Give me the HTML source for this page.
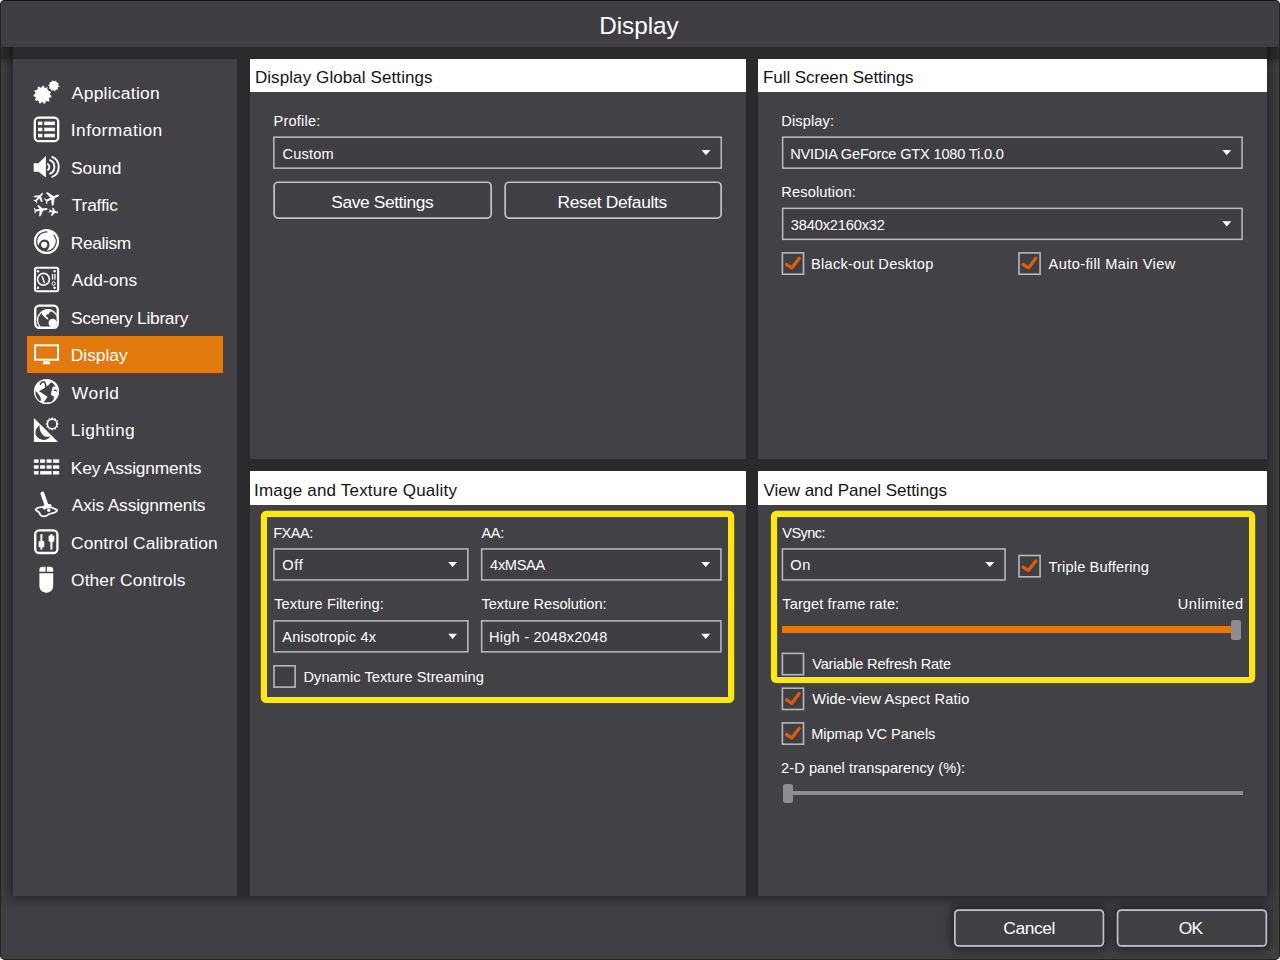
<!DOCTYPE html>
<html lang="en">
<head>
<meta charset="utf-8">
<title>Display</title>
<style>
*{box-sizing:border-box;margin:0;padding:0}
html,body{width:1280px;height:960px;overflow:hidden;background:#fff}
body{font-family:"Liberation Sans",sans-serif;color:#fff;position:relative}
#win{position:absolute;left:0;top:0;width:1280px;height:960px;background:#413f45;border-radius:5px;overflow:hidden}
#frame{position:absolute;left:0;top:0;width:1280px;height:960px;border:7px solid #3f3f40;border-radius:5px}
#edge{position:absolute;left:0;top:0;width:1280px;height:960px;border:1px solid #242425;border-top-color:#141415;border-radius:5px;z-index:9}
#back{position:absolute;left:13px;top:40px;width:1254px;height:856px;background:#2a2a2c;box-shadow:0 0 11px 3px rgba(0,0,0,.46)}
#band{position:absolute;left:0;top:40px;width:1280px;height:19px;background:#2a2a2c;box-shadow:0 3px 5px rgba(0,0,0,.25)}
#title{position:absolute;left:0;top:0;width:1280px;height:47px;background:#403e43}
.pane{position:absolute;background:#424146}
.hd{position:absolute;left:0;top:0;right:0;height:33.8px;background:#fff}
.t{position:absolute;white-space:nowrap}
.sel{position:absolute;left:27.5px;top:335.8px;width:196px;height:37.2px;background:#e2790f}
svg{position:absolute;left:0;top:0}
</style>
</head>
<body>
<div id="win">
<div id="frame"></div>
<div id="band"></div>
<div id="back"></div>
<div id="title"></div>
<div class="pane" style="left:13.4px;top:58.6px;width:224.1px;height:837.4px"><div class="sel" style="left:14.1px;top:277.2px"></div></div>
<div class="pane" style="left:249.8px;top:58.6px;width:496.2px;height:400.4px"><div class="hd"></div></div>
<div class="pane" style="left:758px;top:58.6px;width:509px;height:400.4px"><div class="hd"></div></div>
<div class="pane" style="left:249.8px;top:471.3px;width:496.2px;height:424.7px"><div class="hd"></div></div>
<div class="pane" style="left:758px;top:471.3px;width:509px;height:424.7px"><div class="hd"></div></div>
<div style="position:absolute;left:781.7px;top:626.4px;width:450px;height:7px;background:#e2790f"></div>
<div style="position:absolute;left:1231.4px;top:620.2px;width:10px;height:19.4px;background:#8d8d8f;border-radius:2.5px"></div>
<div style="position:absolute;left:788px;top:791.3px;width:454.5px;height:4px;background:#8d8d8f"></div>
<div style="position:absolute;left:782.8px;top:783.6px;width:10px;height:19.4px;background:#8d8d8f;border-radius:2.5px"></div>
<div style="position:absolute;left:954px;top:909.2px;width:150.3px;height:37.6px;border-radius:4px;box-shadow:0 0 9px 3px rgba(0,0,0,.45)"></div>
<div style="position:absolute;left:1116.7px;top:909.2px;width:150.5px;height:37.6px;border-radius:4px;box-shadow:0 0 9px 3px rgba(0,0,0,.45)"></div>
<svg width="1280" height="960" viewBox="0 0 1280 960">
<rect x="273.85" y="137.15" width="447.40" height="31.00" fill="#3f3e42" stroke="#bdbdbf" stroke-width="1.5"/>
<path fill="#fff" d="M701.60 150.10 h8.8 l-4.4 5.1z"/>
<rect x="274.15" y="182.25" width="217.00" height="35.80" rx="4" fill="#414045" stroke="#c2c2c4" stroke-width="1.7"/>
<rect x="505.15" y="182.25" width="216.00" height="35.80" rx="4" fill="#414045" stroke="#c2c2c4" stroke-width="1.7"/>
<rect x="782.65" y="137.15" width="459.40" height="31.00" fill="#3f3e42" stroke="#bdbdbf" stroke-width="1.5"/>
<path fill="#fff" d="M1222.40 150.10 h8.8 l-4.4 5.1z"/>
<rect x="782.65" y="208.35" width="459.40" height="31.00" fill="#3f3e42" stroke="#bdbdbf" stroke-width="1.5"/>
<path fill="#fff" d="M1222.40 221.30 h8.8 l-4.4 5.1z"/>
<rect x="782.40" y="252.90" width="21.10" height="21.30" fill="#3f3e42" stroke="#b8b8ba" stroke-width="1.6"/>
<rect x="1019.00" y="252.90" width="21.10" height="21.30" fill="#3f3e42" stroke="#b8b8ba" stroke-width="1.6"/>
<rect x="263.9" y="513.9" width="467.2" height="186.1" rx="2.3" fill="none" stroke="#ffe811" stroke-width="6.2"/>
<rect x="273.95" y="548.95" width="193.90" height="31.00" fill="#3f3e42" stroke="#bdbdbf" stroke-width="1.5"/>
<path fill="#fff" d="M448.20 561.90 h8.8 l-4.4 5.1z"/>
<rect x="481.65" y="548.95" width="239.30" height="31.00" fill="#3f3e42" stroke="#bdbdbf" stroke-width="1.5"/>
<path fill="#fff" d="M701.30 561.90 h8.8 l-4.4 5.1z"/>
<rect x="273.95" y="620.85" width="193.90" height="31.00" fill="#3f3e42" stroke="#bdbdbf" stroke-width="1.5"/>
<path fill="#fff" d="M448.20 633.80 h8.8 l-4.4 5.1z"/>
<rect x="481.65" y="620.85" width="239.30" height="31.00" fill="#3f3e42" stroke="#bdbdbf" stroke-width="1.5"/>
<path fill="#fff" d="M701.30 633.80 h8.8 l-4.4 5.1z"/>
<rect x="274.00" y="665.80" width="21.10" height="21.30" fill="#3f3e42" stroke="#b8b8ba" stroke-width="1.6"/>
<rect x="774" y="513.9" width="478.1" height="166.1" rx="2.3" fill="none" stroke="#ffe811" stroke-width="6.2"/>
<rect x="782.45" y="548.95" width="222.60" height="31.00" fill="#3f3e42" stroke="#bdbdbf" stroke-width="1.5"/>
<path fill="#fff" d="M985.40 561.90 h8.8 l-4.4 5.1z"/>
<rect x="1019.00" y="555.50" width="21.10" height="21.30" fill="#3f3e42" stroke="#b8b8ba" stroke-width="1.6"/>
<rect x="782.40" y="653.40" width="21.10" height="21.30" fill="#3f3e42" stroke="#b8b8ba" stroke-width="1.6"/>
<rect x="782.40" y="688.20" width="21.10" height="21.30" fill="#3f3e42" stroke="#b8b8ba" stroke-width="1.6"/>
<rect x="782.40" y="722.90" width="21.10" height="21.30" fill="#3f3e42" stroke="#b8b8ba" stroke-width="1.6"/>
<rect x="954.85" y="910.05" width="148.60" height="35.90" rx="4" fill="#414045" stroke="#c2c2c4" stroke-width="1.7"/>
<rect x="1117.55" y="910.05" width="148.80" height="35.90" rx="4" fill="#414045" stroke="#c2c2c4" stroke-width="1.7"/>
<path fill="#fff" d="M50.10 94.97 L51.55 95.71 L51.20 97.45 L49.57 97.56 L48.81 99.00 L49.64 100.40 L48.40 101.68 L46.97 100.89 L45.56 101.69 L45.50 103.32 L43.76 103.72 L42.98 102.29 L41.36 102.20 L40.43 103.53 L38.75 102.94 L38.87 101.31 L37.56 100.35 L36.05 100.97 L34.96 99.56 L35.95 98.26 L35.36 96.75 L33.75 96.45 L33.60 94.68 L35.13 94.11 L35.45 92.52 L34.26 91.41 L35.10 89.83 L36.69 90.19 L37.82 89.02 L37.42 87.44 L38.97 86.56 L40.12 87.72 L41.70 87.35 L42.22 85.81 L44.00 85.91 L44.34 87.50 L45.87 88.05 L47.14 87.03 L48.59 88.08 L48.01 89.60 L49.00 90.89 L50.62 90.72 L51.27 92.38 L49.96 93.35Z"/>
<path fill="#fff" stroke="#424146" stroke-width="1.3" d="M59.08 85.30 L60.30 85.74 L60.16 87.15 L58.87 87.34 L58.36 88.50 L59.09 89.57 L58.15 90.63 L57.00 90.03 L55.91 90.66 L55.86 91.96 L54.48 92.26 L53.90 91.10 L52.65 90.97 L51.85 92.00 L50.55 91.43 L50.77 90.15 L49.83 89.31 L48.58 89.67 L47.86 88.45 L48.79 87.54 L48.52 86.30 L47.30 85.86 L47.44 84.45 L48.73 84.26 L49.24 83.10 L48.51 82.03 L49.45 80.97 L50.60 81.57 L51.69 80.94 L51.74 79.64 L53.12 79.34 L53.70 80.50 L54.95 80.63 L55.75 79.60 L57.05 80.17 L56.83 81.45 L57.77 82.29 L59.02 81.93 L59.74 83.15 L58.81 84.06Z"/>
<rect x="34.8" y="117.6" width="23.4" height="23.6" rx="4" fill="none" stroke="#fff" stroke-width="2.3"/>
<rect x="38" y="121.6" width="4.4" height="3.5" fill="#fff"/><rect x="44.2" y="121.6" width="10.8" height="3.5" fill="#fff"/>
<rect x="38" y="127.7" width="4.4" height="3.5" fill="#fff"/><rect x="44.2" y="127.7" width="10.8" height="3.5" fill="#fff"/>
<rect x="38" y="133.8" width="4.4" height="3.5" fill="#fff"/><rect x="44.2" y="133.8" width="10.8" height="3.5" fill="#fff"/>
<path fill="#fff" d="M33.7 163.3 H38.4 L45.9 156 V177.4 L38.4 171.7 H33.7Z"/>
<g fill="none" stroke="#fff" stroke-width="1.9"><path d="M47.2 163.6 A3.6 3.6 0 0 1 47.2 170.2"/><path d="M49.4 159.9 A7.4 7.4 0 0 1 49.4 173.9"/><path d="M51.6 156.6 A11 11 0 0 1 51.6 177.2"/></g>
<g fill="#fff" stroke="none"><path fill="none" stroke="#fff" stroke-linecap="round" stroke-width="1.70" d="M42.25 193.71 L35.85 200.89"/><path stroke="#fff" stroke-width="0.5" stroke-linejoin="round" d="M40.58 195.58 L34.57 195.89 L33.83 196.71 L38.86 197.52Z"/><path stroke="#fff" stroke-width="0.5" stroke-linejoin="round" d="M40.58 195.58 L42.37 201.29 L41.63 202.11 L38.86 197.52Z"/><path fill="none" stroke="#fff" stroke-linecap="round" stroke-linejoin="round" stroke-width="0.94" d="M36.72 202.72 L35.84 200.91 L33.93 200.24"/></g>
<g fill="#fff" stroke="none"><path fill="none" stroke="#fff" stroke-linecap="round" stroke-width="2.10" d="M57.84 195.55 L46.66 200.65"/><path stroke="#fff" stroke-width="0.5" stroke-linejoin="round" d="M54.46 197.09 L47.54 192.41 L46.26 192.99 L51.37 198.50Z"/><path stroke="#fff" stroke-width="0.5" stroke-linejoin="round" d="M54.46 197.09 L53.34 205.01 L52.06 205.59 L51.37 198.50Z"/><path fill="none" stroke="#fff" stroke-linecap="round" stroke-linejoin="round" stroke-width="1.16" d="M46.76 203.22 L46.66 200.65 L44.79 198.90"/></g>
<g fill="#fff" stroke="none"><path fill="none" stroke="#fff" stroke-linecap="round" stroke-width="2.00" d="M46.51 209.01 L35.59 210.59"/><path stroke="#fff" stroke-width="0.5" stroke-linejoin="round" d="M43.29 209.48 L38.84 205.41 L37.56 205.59 L40.12 209.93Z"/><path stroke="#fff" stroke-width="0.5" stroke-linejoin="round" d="M43.29 209.48 L40.54 215.81 L39.26 215.99 L40.12 209.93Z"/><path fill="none" stroke="#fff" stroke-linecap="round" stroke-linejoin="round" stroke-width="1.10" d="M34.98 212.84 L35.55 210.59 L34.37 208.59"/></g>
<g fill="#fff" stroke="none"><path fill="none" stroke="#fff" stroke-linecap="round" stroke-width="1.60" d="M57.27 212.39 L50.23 211.11"/><path stroke="#fff" stroke-width="0.5" stroke-linejoin="round" d="M55.38 212.04 L53.49 208.09 L52.51 207.91 L53.02 211.62Z"/><path stroke="#fff" stroke-width="0.5" stroke-linejoin="round" d="M55.38 212.04 L52.09 215.69 L51.11 215.51 L53.02 211.62Z"/><path fill="none" stroke="#fff" stroke-linecap="round" stroke-linejoin="round" stroke-width="0.88" d="M49.26 212.40 L50.10 211.09 L49.77 209.57"/></g>
<circle cx="46.5" cy="241.5" r="12.6" fill="#fff"/>
<path fill="none" stroke="#424146" stroke-width="1.15" d="M47.4 231.9 A9.7 9.7 0 1 0 47.2 251.2 A9.7 9.7 0 0 0 53.6 234.9"/>
<path fill="#424146" d="M37.9 246.6 C39.2 242.2 41.2 239.6 44.4 239.5 C47.9 239.5 49.8 242.4 49.4 245.6 C49.1 248 47.8 249.8 46.4 251.2 C42.8 251 39.6 249.6 37.9 246.6Z"/>
<circle cx="44.2" cy="244.8" r="3.1" fill="#fff"/>
<rect x="35.0" y="267.8" width="23.2" height="23.4" rx="2" fill="none" stroke="#fff" stroke-width="2.1"/>
<circle cx="43.5" cy="279.3" r="5.9" fill="none" stroke="#fff" stroke-width="1.6"/>
<path stroke="#fff" stroke-width="1.4" stroke-linecap="round" d="M42.2 276.6 L44.4 282.7"/>
<circle cx="38.0" cy="271.3" r="1.25" fill="#fff"/>
<circle cx="54.6" cy="271.3" r="1.25" fill="#fff"/>
<circle cx="38.0" cy="287.8" r="1.25" fill="#fff"/>
<circle cx="54.6" cy="287.8" r="1.25" fill="#fff"/>
<rect x="51.9" y="274.0" width="1.3" height="5.6" fill="#fff"/><rect x="54.3" y="274.0" width="1.3" height="5.6" fill="#fff"/>
<circle cx="53.6" cy="283.6" r="1.7" fill="none" stroke="#fff" stroke-width="1"/>
<clipPath id="sc"><rect x="36.2" y="306.6" width="20.6" height="20.2" rx="3"/></clipPath>
<g clip-path="url(#sc)"><circle cx="47.8" cy="320.2" r="10.2" fill="none" stroke="#fff" stroke-width="1.3"/>
<path fill="#fff" d="M41.3 311.7 L44.9 309.4 L49.9 309.0 L52.7 310.3 L49.9 311.7 L48.8 314.2 L46.7 314.5 L45.6 316.0 L47.7 317.4 L48.6 320.0 L46.7 319.1 L44.2 316.7 L42.4 314.9 Z"/></g>
<rect x="35.25" y="305.55" width="22.5" height="22.2" rx="4" fill="none" stroke="#fff" stroke-width="2.3"/>
<circle cx="52.7" cy="323.0" r="4.2" fill="#fff"/>
<rect x="35.1" y="345.3" width="22.9" height="14.4" fill="none" stroke="#fff" stroke-width="2"/>
<path fill="#fff" d="M43.4 361.2 H49.6 L50.4 364.2 H42.6Z"/>
<circle cx="46.5" cy="391.5" r="12.6" fill="#fff"/>
<path fill="#424146" d="M50.9 382.3 L53.0 383.3 L55.7 386.5 L52.7 386.7 L52.2 389.2 L51.3 392.0 L50.9 394.9 L54.1 396.6 L53.4 399.8 L51.3 402.0 L45.6 402.5 L43.7 402.3 L46.7 398.0 L47.7 397.0 L44.9 394.9 L41.7 392.7 L39.0 391.5 L40.6 390.2 L43.5 388.8 L45.6 386.7 L48.4 385.3 L49.9 383.5 Z"/>
<path fill="#424146" d="M35.3 391.1 L37.1 392.6 L39.4 395.6 L40.6 397.7 L41.1 400.5 L39.6 401.1 L37.1 398.0 L35.7 394.9 Z"/>
<path fill="none" stroke="#424146" stroke-width="1.5" stroke-linejoin="round" d="M40.1 384.8 L41.5 382.3 L44.2 381.7 L45.4 383.9 L46.0 386.9"/>
<path fill="none" stroke="#424146" stroke-width="1.2" stroke-linejoin="round" d="M53.8 390.3 L55.5 390.2 L57.3 391.2"/>
<path fill="#fff" d="M33.9 417.9 L58.1 442.1 H33.9Z"/>
<path fill="#424146" d="M39.6 424.9 C36.0 428.0 34.3 431.9 36.4 436.1 C38.9 440.4 46.7 441.8 50.6 436.3 C47.0 437.5 44.2 436.8 42.1 434.0 C39.9 431.1 39.3 428.0 39.6 424.9Z"/>
<path fill="#fff" d="M59.00 423.90 L57.22 425.25 L58.09 427.30 L55.88 427.58 L55.60 429.79 L53.55 428.92 L52.20 430.70 L50.85 428.92 L48.80 429.79 L48.52 427.58 L46.31 427.30 L47.18 425.25 L45.40 423.90 L47.18 422.55 L46.31 420.50 L48.52 420.22 L48.80 418.01 L50.85 418.88 L52.20 417.10 L53.55 418.88 L55.60 418.01 L55.88 420.22 L58.09 420.50 L57.22 422.55Z"/>
<circle cx="52.2" cy="423.9" r="4.0" fill="#424146"/>
<rect x="33.9" y="459.4" width="4.7" height="3.4" fill="#fff"/>
<rect x="53.0" y="459.4" width="6.2" height="3.4" fill="#fff"/>
<rect x="33.9" y="465.3" width="4.7" height="3.4" fill="#fff"/>
<rect x="53.0" y="465.3" width="6.2" height="3.4" fill="#fff"/>
<rect x="33.9" y="471.1" width="4.7" height="3.4" fill="#fff"/>
<rect x="53.0" y="471.1" width="6.2" height="3.4" fill="#fff"/>
<rect x="40.1" y="459.4" width="5" height="3.4" fill="#fff"/><rect x="46.6" y="459.4" width="5" height="3.4" fill="#fff"/>
<rect x="40.1" y="465.3" width="5" height="3.4" fill="#fff"/><rect x="46.6" y="465.3" width="5" height="3.4" fill="#fff"/>
<rect x="40.1" y="471.1" width="11.5" height="3.4" fill="#fff"/>
<path fill="none" stroke="#fff" stroke-width="1.8" stroke-linejoin="round" d="M35.9 509.2 C38.2 506.1 51.3 505.8 57.0 510.0 C57.3 512.5 52.7 512.9 49.1 514.0 C47.0 516.8 41.7 517.1 40.3 514.7 C39.9 512.9 38.9 511.8 37.4 511.1 C36.0 510.6 35.3 510.0 35.9 509.2Z"/>
<path fill="none" stroke="#fff" stroke-width="3.9" stroke-linecap="round" d="M42.4 493.6 L46.3 504.6"/>
<path fill="#fff" d="M43.1 506.1 L45.6 503.7 L50.9 504.2 L51.8 506.3 L49.9 508.3 L46.7 508.6 L44.2 509.7 L42.6 508.3Z"/>
<circle cx="48.7" cy="510.2" r="1.7" fill="#fff"/>
<rect x="35.2" y="530.4" width="22.2" height="22.6" rx="4" fill="none" stroke="#fff" stroke-width="2.3"/>
<rect x="40.4" y="534.2" width="2.0" height="15.4" fill="#fff"/><rect x="50.4" y="534.2" width="2.0" height="15.4" fill="#fff"/>
<rect x="38.6" y="541.1" width="5.7" height="6.2" rx="1" fill="#fff"/><rect x="48.6" y="535.5" width="5.7" height="6.2" rx="1" fill="#fff"/>
<path fill="#fff" d="M39.4 571.8 V569.6 C39.4 567.9 40.6 566.7 42.3 566.7 H45.6 V571.8Z M46.9 571.8 V566.7 H50.3 C52 566.7 53.2 567.9 53.2 569.6 V571.8Z"/>
<path fill="#fff" d="M39.4 573.2 H53.2 V585.6 C53.2 590 50.4 592.7 46.3 592.7 C42.2 592.7 39.4 590 39.4 585.6Z"/>
<path fill="none" stroke="#dc5c0a" stroke-width="3.3" stroke-linecap="round" stroke-linejoin="round" d="M786.5 264.5 L791.8 267.9 L799.2 258.3"/><path fill="none" stroke="#dc5c0a" stroke-width="3.3" stroke-linecap="round" stroke-linejoin="round" d="M1023.1 264.5 L1028.4 267.9 L1035.8 258.3"/><path fill="none" stroke="#dc5c0a" stroke-width="3.3" stroke-linecap="round" stroke-linejoin="round" d="M1023.1 567.1 L1028.4 570.5 L1035.8 560.9"/><path fill="none" stroke="#dc5c0a" stroke-width="3.3" stroke-linecap="round" stroke-linejoin="round" d="M786.5 699.8 L791.8 703.2 L799.2 693.6"/><path fill="none" stroke="#dc5c0a" stroke-width="3.3" stroke-linecap="round" stroke-linejoin="round" d="M786.5 734.5 L791.8 737.9 L799.2 728.3"/>
</svg>
<div class="t" style="left:599.25px;top:9.78px;font-size:24.3px;line-height:32px;letter-spacing:-0.044px;">Display</div>
<div class="t" style="left:254.90px;top:67.11px;font-size:17px;line-height:22px;letter-spacing:0.089px;color:#141414;">Display Global Settings</div>
<div class="t" style="left:763.00px;top:67.11px;font-size:17px;line-height:22px;letter-spacing:-0.080px;color:#141414;">Full Screen Settings</div>
<div class="t" style="left:254.10px;top:479.71px;font-size:17px;line-height:22px;letter-spacing:0.194px;color:#141414;">Image and Texture Quality</div>
<div class="t" style="left:763.50px;top:479.71px;font-size:17px;line-height:22px;letter-spacing:-0.022px;color:#141414;">View and Panel Settings</div>
<div class="t" style="left:71.80px;top:81.67px;font-size:17.4px;line-height:23px;letter-spacing:0.280px;">Application</div>
<div class="t" style="left:70.80px;top:119.17px;font-size:17.4px;line-height:23px;letter-spacing:0.448px;">Information</div>
<div class="t" style="left:71.00px;top:156.67px;font-size:17.4px;line-height:23px;letter-spacing:0.021px;">Sound</div>
<div class="t" style="left:71.80px;top:194.17px;font-size:17.4px;line-height:23px;letter-spacing:-0.209px;">Traffic</div>
<div class="t" style="left:70.80px;top:231.67px;font-size:17.4px;line-height:23px;letter-spacing:-0.388px;">Realism</div>
<div class="t" style="left:71.80px;top:269.17px;font-size:17.4px;line-height:23px;letter-spacing:0.104px;">Add-ons</div>
<div class="t" style="left:71.00px;top:306.67px;font-size:17.4px;line-height:23px;letter-spacing:-0.314px;">Scenery Library</div>
<div class="t" style="left:70.80px;top:344.17px;font-size:17.4px;line-height:23px;letter-spacing:-0.038px;">Display</div>
<div class="t" style="left:71.80px;top:381.67px;font-size:17.4px;line-height:23px;letter-spacing:0.531px;">World</div>
<div class="t" style="left:70.80px;top:419.17px;font-size:17.4px;line-height:23px;letter-spacing:0.422px;">Lighting</div>
<div class="t" style="left:70.80px;top:456.67px;font-size:17.4px;line-height:23px;letter-spacing:-0.204px;">Key Assignments</div>
<div class="t" style="left:71.80px;top:494.17px;font-size:17.4px;line-height:23px;letter-spacing:-0.170px;">Axis Assignments</div>
<div class="t" style="left:71.00px;top:531.67px;font-size:17.4px;line-height:23px;letter-spacing:0.147px;">Control Calibration</div>
<div class="t" style="left:71.00px;top:569.17px;font-size:17.4px;line-height:23px;letter-spacing:0.109px;">Other Controls</div>
<div class="t" style="left:273.60px;top:111.84px;font-size:14.6px;line-height:19px;letter-spacing:0.183px;">Profile:</div>
<div class="t" style="left:282.50px;top:144.94px;font-size:14.6px;line-height:19px;letter-spacing:0.175px;">Custom</div>
<div class="t" style="left:331.25px;top:190.67px;font-size:17.4px;line-height:23px;letter-spacing:-0.405px;">Save Settings</div>
<div class="t" style="left:557.50px;top:190.67px;font-size:17.4px;line-height:23px;letter-spacing:-0.328px;">Reset Defaults</div>
<div class="t" style="left:781.30px;top:112.04px;font-size:14.6px;line-height:19px;letter-spacing:0.107px;">Display:</div>
<div class="t" style="left:790.20px;top:144.94px;font-size:14.6px;line-height:19px;letter-spacing:-0.185px;">NVIDIA GeForce GTX 1080 Ti.0.0</div>
<div class="t" style="left:781.30px;top:182.74px;font-size:14.6px;line-height:19px;letter-spacing:0.144px;">Resolution:</div>
<div class="t" style="left:790.80px;top:215.54px;font-size:14.6px;line-height:19px;letter-spacing:-0.149px;">3840x2160x32</div>
<div class="t" style="left:811.10px;top:255.04px;font-size:14.6px;line-height:19px;letter-spacing:0.237px;">Black-out Desktop</div>
<div class="t" style="left:1048.60px;top:255.04px;font-size:14.6px;line-height:19px;letter-spacing:0.382px;">Auto-fill Main View</div>
<div class="t" style="left:273.20px;top:523.54px;font-size:14.6px;line-height:19px;letter-spacing:-0.529px;">FXAA:</div>
<div class="t" style="left:282.30px;top:556.04px;font-size:14.6px;line-height:19px;letter-spacing:0.629px;">Off</div>
<div class="t" style="left:274.20px;top:595.44px;font-size:14.6px;line-height:19px;letter-spacing:0.099px;">Texture Filtering:</div>
<div class="t" style="left:282.30px;top:628.24px;font-size:14.6px;line-height:19px;letter-spacing:0.157px;">Anisotropic 4x</div>
<div class="t" style="left:303.50px;top:667.64px;font-size:14.6px;line-height:19px;letter-spacing:0.053px;">Dynamic Texture Streaming</div>
<div class="t" style="left:481.40px;top:523.54px;font-size:14.6px;line-height:19px;letter-spacing:-0.284px;">AA:</div>
<div class="t" style="left:490.10px;top:556.04px;font-size:14.6px;line-height:19px;letter-spacing:-0.328px;">4xMSAA</div>
<div class="t" style="left:481.40px;top:595.44px;font-size:14.6px;line-height:19px;letter-spacing:0.018px;">Texture Resolution:</div>
<div class="t" style="left:489.10px;top:628.24px;font-size:14.6px;line-height:19px;letter-spacing:0.200px;">High - 2048x2048</div>
<div class="t" style="left:782.30px;top:523.54px;font-size:14.6px;line-height:19px;letter-spacing:-0.576px;">VSync:</div>
<div class="t" style="left:790.20px;top:556.04px;font-size:14.6px;line-height:19px;letter-spacing:0.749px;">On</div>
<div class="t" style="left:1048.60px;top:557.64px;font-size:14.6px;line-height:19px;letter-spacing:0.144px;">Triple Buffering</div>
<div class="t" style="left:782.30px;top:595.24px;font-size:14.6px;line-height:19px;letter-spacing:0.099px;">Target frame rate:</div>
<div class="t" style="left:1177.70px;top:595.24px;font-size:14.6px;line-height:19px;letter-spacing:0.574px;">Unlimited</div>
<div class="t" style="left:812.20px;top:654.94px;font-size:14.6px;line-height:19px;letter-spacing:-0.184px;">Variable Refresh Rate</div>
<div class="t" style="left:812.20px;top:690.24px;font-size:14.6px;line-height:19px;letter-spacing:0.182px;">Wide-view Aspect Ratio</div>
<div class="t" style="left:811.20px;top:725.34px;font-size:14.6px;line-height:19px;letter-spacing:-0.047px;">Mipmap VC Panels</div>
<div class="t" style="left:781.10px;top:759.44px;font-size:14.6px;line-height:19px;letter-spacing:0.060px;">2-D panel transparency (%):</div>
<div class="t" style="left:1003.30px;top:916.67px;font-size:17.4px;line-height:23px;letter-spacing:-0.434px;">Cancel</div>
<div class="t" style="left:1178.80px;top:916.67px;font-size:17.4px;line-height:23px;letter-spacing:-0.827px;">OK</div>
<div id="edge"></div>
</div>
</body>
</html>
